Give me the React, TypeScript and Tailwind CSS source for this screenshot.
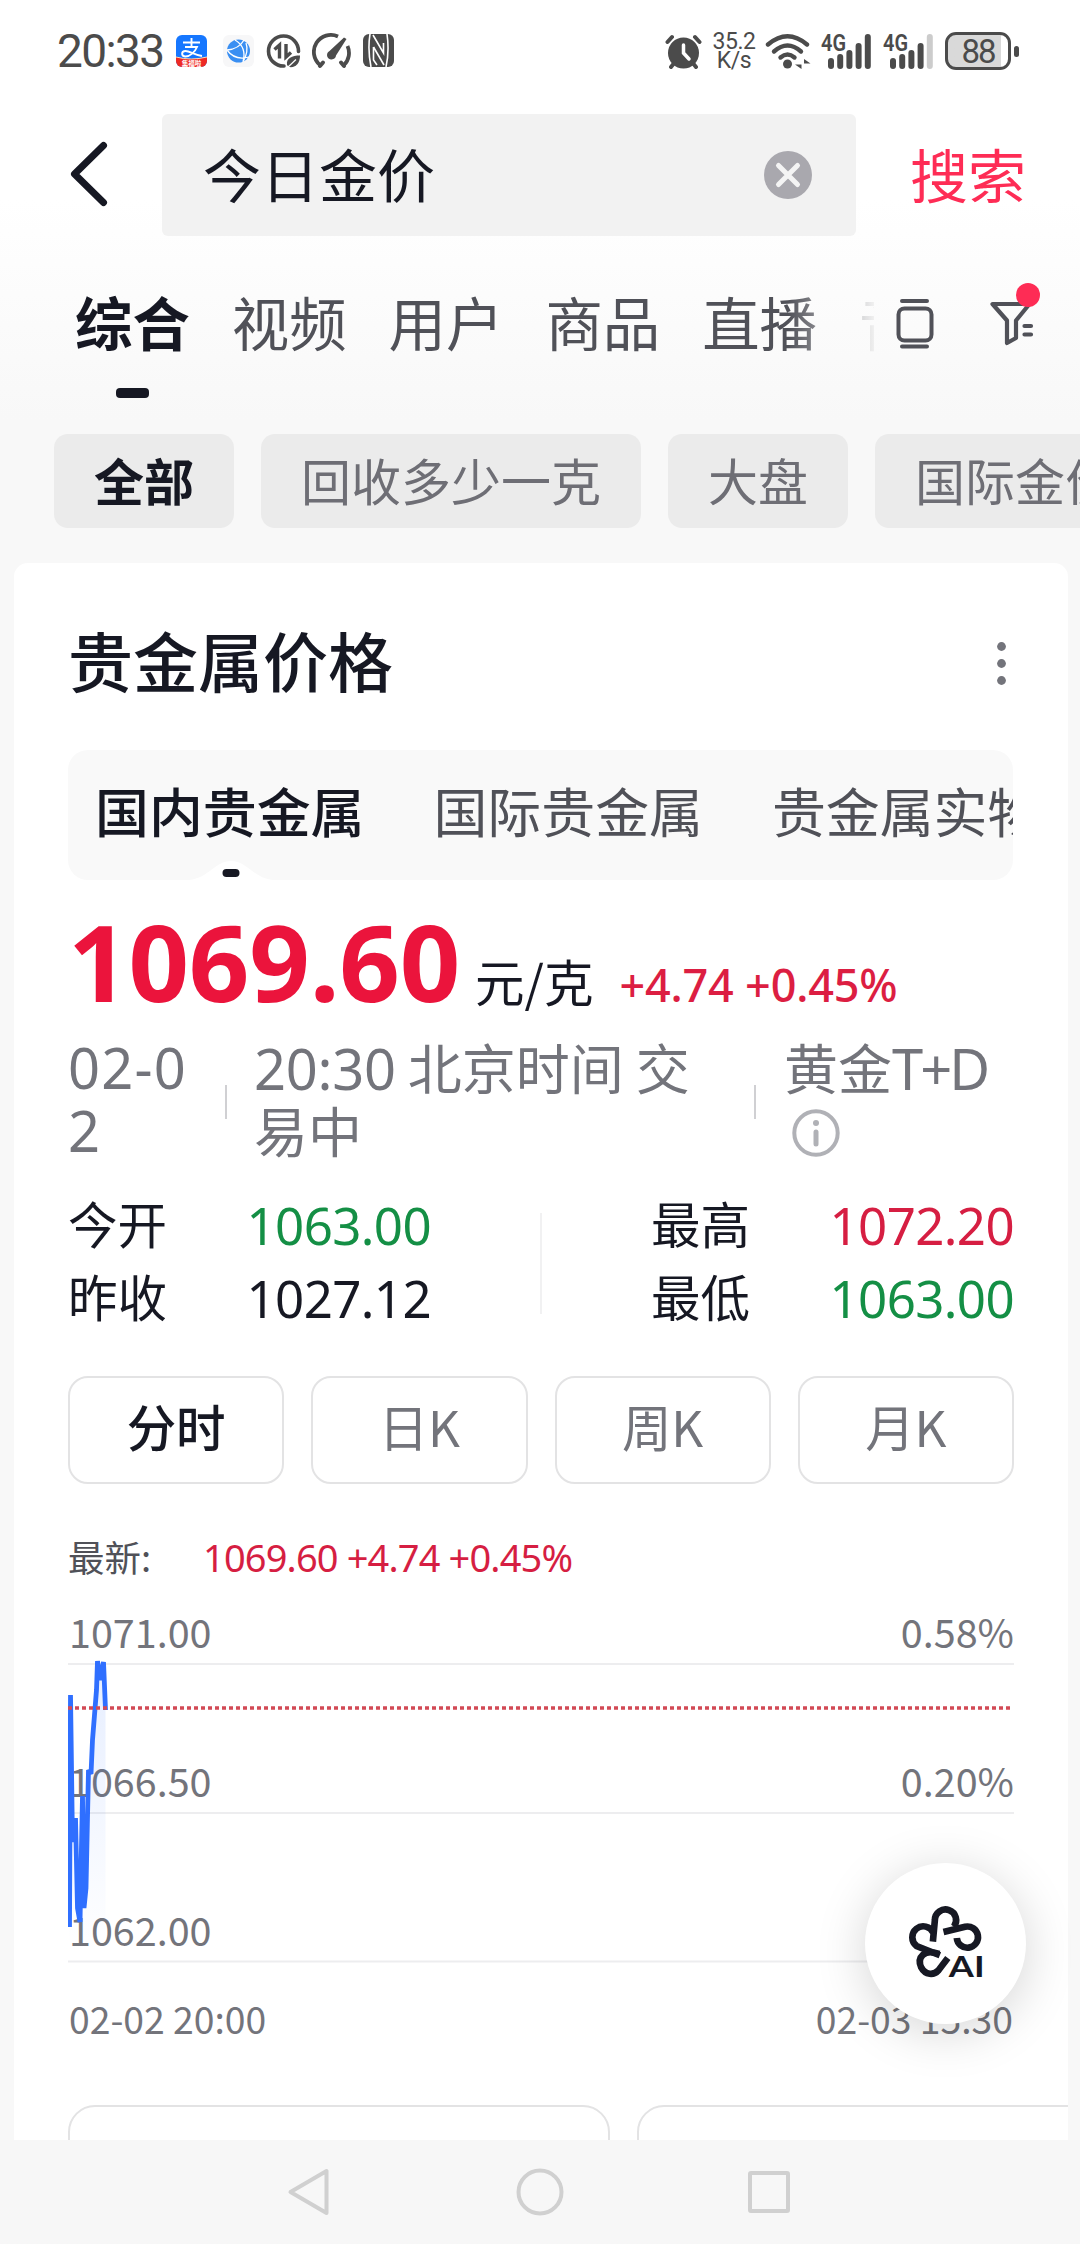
import { clsx } from "clsx";
import type { ReactNode } from "react";

const tabs = ["综合", "视频", "用户", "商品", "直播", "音乐"];
const chips = ["全部", "回收多少一克", "大盘", "国际金价"];
const markets = ["国内贵金属", "国际贵金属", "贵金属实物"];
const periods = ["分时", "日K", "周K", "月K"];

const gridLines = [
  { y: 82, price: "1071.00", rate: "0.58%" },
  { y: 231, price: "1066.50", rate: "0.20%" },
  { y: 379.5, price: "1062.00", rate: "" },
];

const trend =
  "1.5,345 2.5,113 4.5,260 7.5,236 9.5,326 12,340 14.5,214 16,326 18,306 20.5,188 23,192 24.5,158 28.5,108 29.5,79 32.5,98 35.5,80 37.5,128";

const Num = ({ className, children }: { className?: string; children: ReactNode }) => (
  <span className={clsx("font-['Noto_Sans','Noto_Sans_CJK_SC',sans-serif]", className)}>{children}</span>
);

const SignalBars = ({ weak }: { weak?: boolean }) => (
  <svg width="52" height="38" viewBox="0 0 52 38" fill="#4b4b4b">
    <text x="0" y="19" fontSize="23" fontWeight="600" fontFamily="Roboto, sans-serif" textLength="25" lengthAdjust="spacingAndGlyphs">
      4G
    </text>
    <rect x="7" y="26" width="6" height="11" rx="3" />
    <rect x="16.2" y="22" width="6" height="15" rx="3" />
    <rect x="25.4" y="18" width="6" height="19" rx="3" />
    <rect x="34.6" y="11" width="6" height="26" rx="3" />
    <rect x="43.8" y="2" width="6" height="35" rx="3" fill={weak ? "#cccccc" : "#4b4b4b"} />
  </svg>
);

const StatusBar = () => (
  <div className="flex h-[102px] items-center justify-between pl-[57px] pr-[61px] text-[#4b4b4b]">
    <div className="flex items-center">
      <span className="w-[119px] font-['Roboto',sans-serif] text-[46px] leading-none tracking-[-1.6px]">20:33</span>
      <svg width="31" height="32" viewBox="0 0 31 32">
        <clipPath id="pay">
          <rect width="31" height="32" rx="6" />
        </clipPath>
        <g clipPath="url(#pay)">
          <rect width="31" height="32" fill="#1677ff" />
          <path d="M0 22 Q15 26 31 22 V32 H0Z" fill="#ee2a24" />
          <path d="M0 22 Q15 26 31 22" stroke="#ffd9b0" strokeWidth="1" fill="none" />
          <path
            d="M7 7.5H24M15.5 3V12M9 12H21C19 17 14 21.500 9.500 21.500C5 21.500 5 16 9.500 16C14 16 18 20 26 21"
            stroke="#fff"
            strokeWidth="1.900"
            fill="none"
          />
          <text x="15.500" y="30.500" fontSize="6.500" fill="#fff" textAnchor="middle" fontWeight="700">
            集福啦
          </text>
        </g>
      </svg>
      <svg className="ml-4" width="31" height="32" viewBox="0 0 31 32">
        <rect width="31" height="32" rx="6" fill="#f7f7f8" />
        <circle cx="15.500" cy="16" r="11.500" fill="#3a8ff2" />
        <path d="M12 5Q24 12 20 27M4 15Q16 14 21 5M4 15Q12 26 26 22M23 8Q26 16 20 27" stroke="#fff" strokeWidth="1.300" fill="none" />
      </svg>
      <svg className="ml-[12px]" width="35" height="36" viewBox="0 0 35 36" fill="none" stroke="#4b4b4b">
        <path d="M18 33A15 15 0 1 1 32.500 18.500" strokeWidth="3.600" strokeLinecap="round" />
        <path d="M8.500 16.500L13.500 12V25.500M20 11V24L25 19.500" strokeWidth="3.400" />
        <path d="M21 32C20 25 26 22.500 34 22.500C34 30 30 35 23 34Z" fill="#4b4b4b" stroke="none" />
        <path d="M21 35L30 26.500" stroke="#fff" strokeWidth="1.200" />
      </svg>
      <svg className="ml-[11px]" width="40" height="36" viewBox="0 0 40 36" fill="none" stroke="#4b4b4b">
        <path d="M8 32A17 17 0 0 1 26 3.500M35.500 13A17 17 0 0 1 32 32" strokeWidth="3.800" />
        <path d="M8 33L11 29.500M32 33L29 29.500" strokeWidth="4" strokeLinecap="round" />
        <path d="M34.500 6L24 22.500A4.500 4.500 0 1 1 17.500 18L32 4.500Z" fill="#4b4b4b" stroke="none" />
      </svg>
      <svg className="ml-[11px]" width="32" height="34" viewBox="0 0 32 34">
        <rect width="31" height="33" rx="6" fill="#4b4b4b" />
        <path d="M7 0Q4.500 16 8 33M24 0Q26.500 17 23 33" stroke="#fff" strokeWidth="1.600" fill="none" />
        <path d="M10 1L20.500 19V9M10.500 13V26L14 31" stroke="#fff" strokeWidth="1.600" fill="none" />
        <path d="M10.500 13L21 31" stroke="#fff" strokeWidth="1.600" />
      </svg>
    </div>
    <div className="flex items-center">
      <svg width="37" height="36" viewBox="0 0 37 36" stroke="#4b4b4b" strokeLinecap="round">
        <circle cx="18.500" cy="20" r="15.500" fill="#4b4b4b" stroke="none" />
        <path d="M2.500 9L7 4M34.500 9L30 4M6 34L10 29M31 34L27 29" strokeWidth="4" />
        <path d="M18.500 12V20L24 26" stroke="#fff" strokeWidth="3.500" fill="none" />
      </svg>
      <div className="ml-[9px] flex w-[46px] flex-col items-center font-['Roboto',sans-serif] text-[23px] leading-[19px] tracking-[-0.5px]">
        <span>35.2</span>
        <span>K/s</span>
      </div>
      <svg className="ml-2" width="46" height="36" viewBox="0 0 46 36" stroke="#4b4b4b" fill="none" strokeLinecap="round">
        <path d="M3 11.500Q22.500 -5 42 11.500" strokeWidth="4.400" />
        <path d="M9 18.500Q22.500 6.500 36 18.500" strokeWidth="4.400" />
        <path d="M15.500 24.500Q22.500 18.500 29.500 24.500" strokeWidth="4.400" />
        <circle cx="22.500" cy="31" r="4.500" fill="#4b4b4b" stroke="none" />
        <path d="M36.500 26V36L30 31.500H36.500ZM39 36V26L45.500 30.500H39Z" fill="#4b4b4b" stroke="none" />
      </svg>
      <div className="ml-2.5 flex gap-2.5">
        <SignalBars />
        <SignalBars weak />
      </div>
      <div className="ml-2.5 flex items-center gap-[3px]">
        <div className="flex h-[38px] w-[66px] items-center justify-center rounded-[11px] border-[3px] border-[#4b4b4b] bg-linear-to-r from-[#d9d9d9] from-88% to-white to-88% font-['Roboto',sans-serif] text-[33px] leading-none tracking-[-2px]">
          88
        </div>
        <div className="h-[11px] w-[5px] rounded-full bg-[#4b4b4b]" />
      </div>
    </div>
  </div>
);

const SearchBar = () => (
  <div className="mt-3 flex h-[122px] items-center">
    <svg className="ml-[69px]" width="39" height="68" viewBox="0 0 39 68">
      <path d="M34.500 4.500L5.500 33L34.500 61.500" stroke="#161823" strokeWidth="7" fill="none" strokeLinecap="round" strokeLinejoin="round" />
    </svg>
    <div className="ml-[54px] flex h-full w-[694px] items-center justify-between rounded-[6px] bg-[#f2f2f2] pl-[41px] pr-11">
      <span className="pb-1 text-[58px] leading-[80px] text-[#161823]">今日金价</span>
      <svg width="48" height="48" viewBox="0 0 48 48">
        <circle cx="24" cy="24" r="24" fill="#a9a8ae" />
        <path d="M14.500 14.500L33.500 33.500M33.500 14.500L14.500 33.500" stroke="#f4f4f4" strokeWidth="5" strokeLinecap="round" />
      </svg>
    </div>
    <span className="ml-[54px] pb-1 text-[58px] leading-[80px] text-[#fe2c55]">搜索</span>
  </div>
);

const CategoryTabs = () => (
  <div className="flex h-[198px] pl-[75px] pt-[48px]">
    <div className="flex w-[799px] gap-[42px] overflow-hidden mask-r-from-[713px] mask-r-to-[805px]">
      {tabs.map((tab, i) => (
        <div
          key={tab}
          className={clsx(
            "flex shrink-0 flex-col items-center text-[57.4px] leading-[74px]",
            i === 0 ? "font-bold text-[#161823]" : "text-[#505158]",
          )}
        >
          {tab}
          {i === 0 && <span className="mt-[30px] h-[10px] w-[33px] rounded-[4px] bg-[#161823]" />}
        </div>
      ))}
    </div>
    <svg className="ml-[22px] mt-[14px]" width="38" height="52" viewBox="0 0 38 52" fill="none" stroke="#505158" strokeWidth="4" strokeLinecap="round">
      <path d="M6 3H31M6 48.500H31" />
      <rect x="2.500" y="10.500" width="33" height="32" rx="6" />
    </svg>
    <div className="relative ml-[56px] mt-[17px] h-[48px] w-[46px]">
      <svg width="46" height="48" viewBox="0 0 46 48" fill="none" stroke="#505158" strokeWidth="4.200" strokeLinecap="round" strokeLinejoin="round">
        <path d="M2.500 3H39.500L26 19.500V37L17 42V19.500Z" />
        <path d="M34.500 25H41M34.500 33.500H41" />
      </svg>
      <span className="absolute -top-[18px] left-[26px] size-6 rounded-full bg-[#fe2c55]" />
    </div>
  </div>
);

const PriceChart = () => (
  <svg className="block font-['Noto_Sans_CJK_SC',sans-serif]" width="946" height="478" viewBox="0 0 946 478">
    <defs>
      <linearGradient id="area" x1="0" y1="0" x2="0" y2="1">
        <stop offset="0" stopColor="#2f6fff" stopOpacity="0.120" />
        <stop offset="1" stopColor="#2f6fff" stopOpacity="0" />
      </linearGradient>
    </defs>
    {gridLines.map((line) => (
      <g key={line.price} fill="#73747b" fontSize="39.500">
        <path d={`M0 ${line.y}H946`} stroke="#ededef" strokeWidth="2" />
        <text x="1" y={line.y - 16}>
          {line.price}
        </text>
        <text x="946" y={line.y - 16} textAnchor="end">
          {line.rate}
        </text>
      </g>
    ))}
    <polygon points={`${trend} 37.5,370 1.5,370`} fill="url(#area)" />
    <polyline points={trend} fill="none" stroke="#2f6fff" strokeWidth="4.800" strokeLinejoin="bevel" />
    <path d="M0 126H944" stroke="#d24a55" strokeWidth="3.500" strokeDasharray="4 3" />
    <g fill="#73747b" fontSize="37.300">
      <text x="1" y="452">
        02-02 20:00
      </text>
      <text x="945" y="452" textAnchor="end">
        02-03 15:30
      </text>
    </g>
  </svg>
);

const Quote = ({ label, value, color }: { label: string; value: string; color: string }) => (
  <div className="flex h-[73px] justify-between">
    <span>{label}</span>
    <Num className={clsx("pt-[3px] text-[51px] tracking-[-0.6px]", color)}>{value}</Num>
  </div>
);

const MetalCard = () => (
  <div className="ml-3.5 mt-[35px] h-[1577px] w-[1054px] shrink-0 overflow-hidden rounded-t-[14px] bg-white pl-[54px] text-[#161823]">
    <div className="w-[946px]">
      <div className="flex h-[187px] items-center justify-between pt-[7px] text-[65px] font-medium">
        <span>贵金属价格</span>
        <svg className="mr-2 mt-[6px]" width="9" height="43" viewBox="0 0 9 43" fill="#73747b">
          <circle cx="4.500" cy="4.500" r="4.400" />
          <circle cx="4.500" cy="21.500" r="4.400" />
          <circle cx="4.500" cy="38.500" r="4.400" />
        </svg>
      </div>

      <div className="relative h-[130px] w-[945px] overflow-hidden rounded-[20px] bg-[#f9f9f9]">
        <div className="flex gap-[69px] whitespace-nowrap pl-[27px] text-[53.9px] leading-[119px]">
          {markets.map((market, i) => (
            <span key={market} className={i === 0 ? "font-medium" : "text-[#505158]"}>
              {market}
            </span>
          ))}
        </div>
        <svg className="absolute bottom-0 left-[121px]" width="84" height="20" viewBox="0 0 84 20">
          <path d="M0 20C20 18 26 1 42 1S64 18 84 20Z" fill="#fff" />
          <rect x="33.500" y="9" width="17" height="8" rx="4" fill="#161823" />
        </svg>
      </div>

      <div className="mt-[28px] flex h-[105px] items-baseline whitespace-nowrap">
        <Num className="w-[390px] text-[106px] font-bold leading-none tracking-[-0.2px] text-[#eb143c]">1069.60</Num>
        <span className="ml-[17px] text-[49.5px] leading-none">元/克</span>
        <Num className="ml-[26px] text-[45px] font-medium leading-none tracking-[-0.2px] text-[#dc1e42]">+4.74 +0.45%</Num>
      </div>

      <div className="mt-[21px] flex h-[126px] text-[54px] leading-[63px] text-[#73747b]">
        <Num className="w-[122px] pt-0.5 text-[56px] tracking-[1.2px]">
          02-0
          <br />2
        </Num>
        <span className="ml-[35px] mt-[51px] h-[34px] w-[2px] bg-[#d0d0d3]" />
        <div className="ml-[27px] w-[500px] pt-px">
          <Num className="text-[56px] leading-none tracking-[-0.3px]">20:30</Num> 北京时间 交
          <br />
          易中
        </div>
        <span className="mt-[51px] h-[34px] w-[2px] bg-[#d0d0d3]" />
        <div className="ml-[28px] pt-px">
          黄金<Num className="text-[56px] leading-none tracking-[-3px]">T+D</Num>
          <svg className="ml-[8px] mt-[11px]" width="48" height="48" viewBox="0 0 48 48" stroke="#b0b1b6" fill="none">
            <circle cx="24" cy="24" r="21.700" strokeWidth="4" />
            <circle cx="24" cy="14" r="3" fill="#b0b1b6" stroke="none" />
            <path d="M24 23V35" strokeWidth="5" strokeLinecap="round" />
          </svg>
        </div>
      </div>

      <div className="mt-[26px] flex h-[146px] items-start justify-between text-[49.5px] leading-[73px]">
        <div className="w-[363px]">
          <Quote label="今开" value="1063.00" color="text-[#148f45]" />
          <Quote label="昨收" value="1027.12" color="text-[#161823]" />
        </div>
        <span className="mt-[27px] h-[101px] w-[2px] bg-[#f1f1f2]" />
        <div className="w-[363px]">
          <Quote label="最高" value="1072.20" color="text-[#d61e42]" />
          <Quote label="最低" value="1063.00" color="text-[#148f45]" />
        </div>
      </div>

      <div className="mt-[44px] grid h-[108px] grid-cols-4 gap-[27px] text-[49.5px]">
        {periods.map((period, i) => (
          <button
            type="button"
            key={period}
            className={clsx(
              "rounded-[20px] border-2 border-[#e3e3e4] pb-2 leading-[90px]",
              i === 0 ? "font-medium" : "text-[#73747b]",
            )}
          >
            {period}
          </button>
        ))}
      </div>

      <div className="mt-[47px] flex h-[51px] whitespace-nowrap text-[36.5px] leading-[52px]">
        <span className="w-[135px] text-[#505158]">最新:</span>
        <Num className="text-[38px] tracking-[-0.85px] text-[#d61e42]">1069.60 +4.74 +0.45%</Num>
      </div>
      <PriceChart />
    </div>
    <div className="mt-[45px] flex gap-[27px]">
      <div className="h-[120px] w-[542px] shrink-0 rounded-[27px] border-2 border-[#e3e3e4]" />
      <div className="h-[120px] w-[542px] shrink-0 rounded-[27px] border-2 border-[#e3e3e4]" />
    </div>
  </div>
);

const AiButton = () => (
  <button
    type="button"
    className="absolute left-[865px] top-[1863px] flex size-[161px] items-center justify-center rounded-full bg-white shadow-[0_8px_50px_rgba(0,0,0,0.17)]"
  >
    <svg width="81" height="80" viewBox="165 192 244 240" fill="none" stroke="#161823" strokeWidth="20">
      <path d="M249 305L255 240A32 32 0 1 1 312 260" />
      <path d="M281 276L346 260A32 32 0 1 1 321 294" />
      <path d="M250 278A33 33 0 1 0 200 318L270 346" />
      <path d="M268 342C222 326 200 352 214 383C226 406 252 407 266 391L294 354" />
      <text x="297" y="412" fontSize="88" fontWeight="700" fontFamily="Lato, sans-serif" fill="#161823" stroke="none" textLength="108" lengthAdjust="spacingAndGlyphs">
        AI
      </text>
    </svg>
  </button>
);

const NavBar = () => (
  <div className="flex h-[104px] w-full items-center bg-[#f7f7f7]">
    <svg className="ml-[287px]" width="44" height="52" viewBox="0 0 44 52" fill="none" stroke="#d0d0d0" strokeWidth="4" strokeLinejoin="round">
      <path d="M3.500 26L39.500 5V47Z" />
    </svg>
    <svg className="ml-[185px]" width="48" height="48" viewBox="0 0 48 48" fill="none" stroke="#d0d0d0" strokeWidth="4">
      <circle cx="24" cy="24" r="21.500" />
    </svg>
    <div className="ml-[184px] size-[42px] rounded-[3px] border-4 border-[#d0d0d0]" />
  </div>
);

export default function App() {
  return (
    <div className="relative flex h-[2244px] w-[1080px] flex-col overflow-hidden bg-[#f8f8f8] bg-[linear-gradient(#ffffff_200px,#f8f8f8_420px)] font-['Noto_Sans_CJK_SC',sans-serif]">
      <StatusBar />
      <SearchBar />
      <CategoryTabs />
      <div className="flex h-[94px] gap-[27px] pl-[54px] text-[50px] leading-[91px]">
        {chips.map((chip, i) => (
          <span
            key={chip}
            className={clsx(
              "shrink-0 rounded-[14px] bg-[#ebebeb] px-10",
              i === 0 ? "font-bold text-[#161823]" : "text-[#6e6e75]",
            )}
          >
            {chip}
          </span>
        ))}
      </div>
      <MetalCard />
      <NavBar />
      <AiButton />
    </div>
  );
}
